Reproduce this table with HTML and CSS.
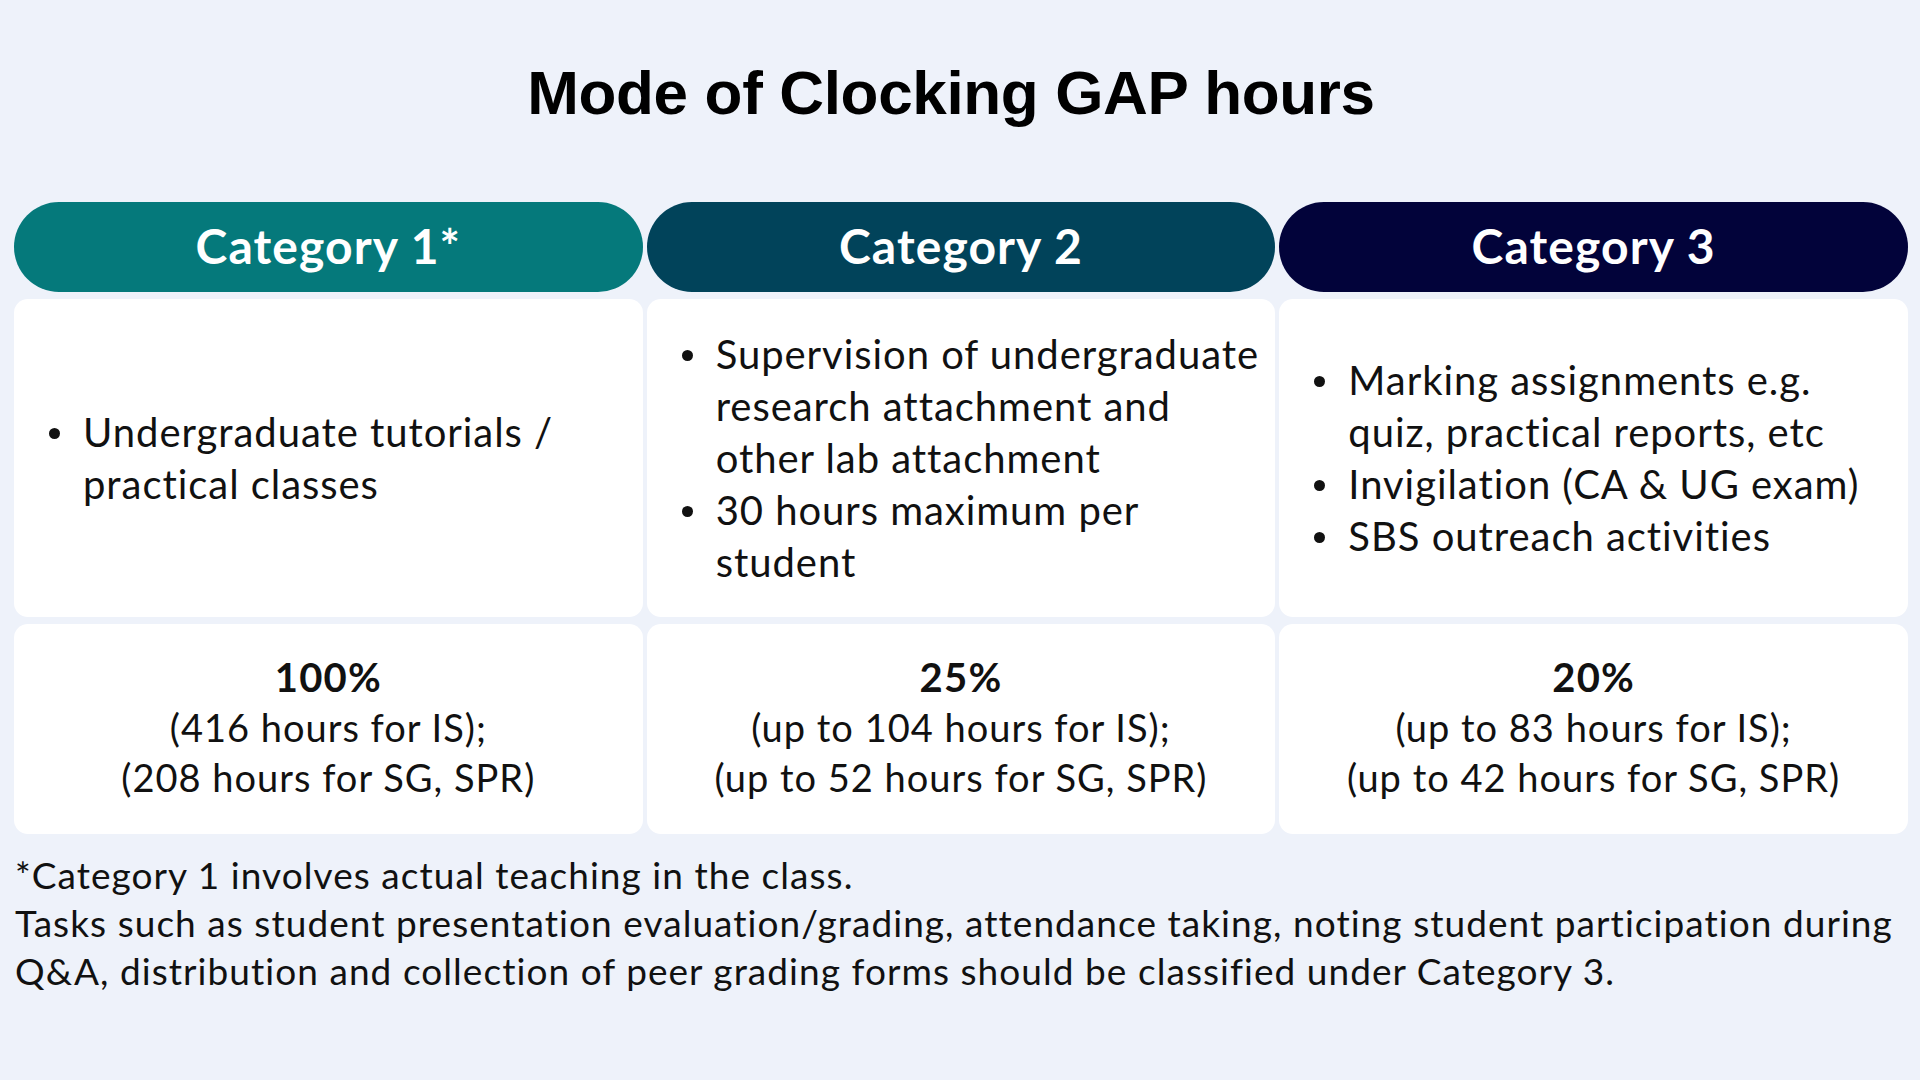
FILE: index.html
```html
<!DOCTYPE html>
<html lang="en">
<head>
<meta charset="utf-8">
<title>Mode of Clocking GAP hours</title>
<link rel="stylesheet" href="styles.css">
</head>
<body>
<main class="slide">
  <h1 class="title">Mode of Clocking GAP hours</h1>
  <section class="table">
    <div class="pill pill-1">Category 1*</div>
    <div class="pill pill-2">Category 2</div>
    <div class="pill pill-3">Category 3</div>

    <div class="card tasks">
      <ul>
        <li>Undergraduate tutorials /<br>practical classes</li>
      </ul>
    </div>
    <div class="card tasks">
      <ul>
        <li>Supervision of undergraduate<br>research attachment and<br>other lab attachment</li>
        <li>30 hours maximum per<br>student</li>
      </ul>
    </div>
    <div class="card tasks">
      <ul>
        <li>Marking assignments e.g.<br>quiz, practical reports, etc</li>
        <li>Invigilation (CA &amp; UG exam)</li>
        <li>SBS outreach activities</li>
      </ul>
    </div>

    <div class="card share">
      <strong>100%</strong>
      <span>(416 hours for IS);</span>
      <span>(208 hours for SG, SPR)</span>
    </div>
    <div class="card share">
      <strong>25%</strong>
      <span>(up to 104 hours for IS);</span>
      <span>(up to 52 hours for SG, SPR)</span>
    </div>
    <div class="card share">
      <strong>20%</strong>
      <span>(up to 83 hours for IS);</span>
      <span>(up to 42 hours for SG, SPR)</span>
    </div>
  </section>
  <footer class="notes">
    <p>*Category 1 involves actual teaching in the class.</p>
    <p>Tasks such as student presentation evaluation/grading, attendance taking, noting student participation during<br>Q&amp;A, distribution and collection of peer grading forms should be classified under Category 3.</p>
  </footer>
</main>
</body>
</html>
```
FILE: styles.css
```css
* { box-sizing: border-box; }

html, body {
  margin: 0;
  padding: 0;
  background: #eef2fa;
}

body {
  width: 1920px;
  height: 1080px;
  overflow: hidden;
  font-family: Lato, "Open Sans", sans-serif;
  color: #111;
}

.slide {
  padding: 57px 12px 0 14px;
}

.title {
  margin: 0 0 73px;
  padding-right: 20px;
  font-family: "Liberation Sans", Arial, sans-serif;
  font-weight: 700;
  font-size: 62px;
  line-height: 72px;
  letter-spacing: -0.35px;
  text-align: center;
  color: #000;
}

.table {
  display: grid;
  grid-template-columns: repeat(3, 1fr);
  grid-template-rows: 90px 318px 210px;
  column-gap: 4px;
  row-gap: 7px;
}

.pill {
  display: flex;
  align-items: center;
  justify-content: center;
  border-radius: 45px;
  color: #fff;
  font-family: Lato, sans-serif;
  font-weight: 700;
  font-size: 48px;
  letter-spacing: 1.1px;
  padding-bottom: 4px;
}

.pill-1 { background: #05797b; }
.pill-2 { background: #01435a; }
.pill-3 { background: #02033a; }

.card {
  background: #fff;
  border-radius: 14px;
}

.tasks {
  display: flex;
  align-items: center;
  padding: 0 0 0 34px;
}

.tasks ul {
  list-style: none;
  margin: 0;
  padding: 0;
  font-size: 40px;
  line-height: 52px;
  letter-spacing: 0.95px;
  white-space: nowrap;
}

.tasks li {
  position: relative;
  padding-left: 35px;
}

.tasks li::before {
  content: "";
  position: absolute;
  left: 1px;
  top: 22px;
  width: 11px;
  height: 11px;
  border-radius: 50%;
  background: #111;
}

.share {
  display: flex;
  flex-direction: column;
  align-items: center;
  justify-content: center;
  font-size: 38px;
  line-height: 50px;
  letter-spacing: 1px;
  text-align: center;
  white-space: nowrap;
  padding-bottom: 4px;
}

.share strong {
  font-weight: 700;
  font-size: 40px;
  letter-spacing: 1.2px;
}

.notes {
  margin-top: 17px;
  padding-left: 1px;
  font-size: 37px;
  line-height: 48px;
  letter-spacing: 1.05px;
  white-space: nowrap;
}

.notes p {
  margin: 0;
}
```
